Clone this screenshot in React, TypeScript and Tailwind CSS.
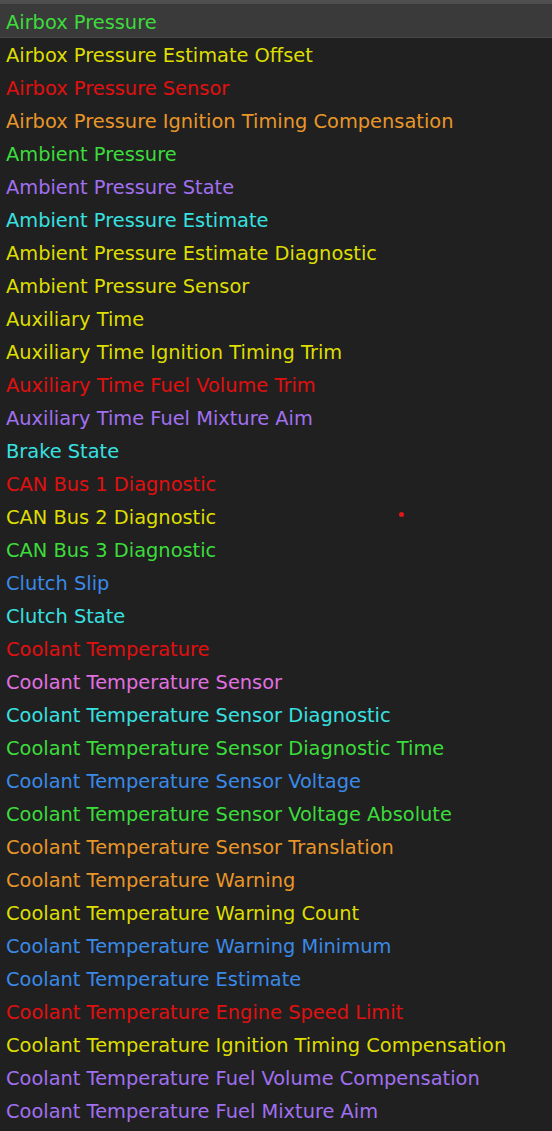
const GREEN = "text-[#3cdc3c]";
const YELLOW = "text-[#dede00]";
const RED = "text-[#e01010]";
const ORANGE = "text-[#e8962a]";
const PURPLE = "text-[#a070f0]";
const CYAN = "text-[#38e0e0]";
const BLUE = "text-[#3a8ae8]";
const PINK = "text-[#e070e0]";

const channels: [string, string][] = [
    ["Airbox Pressure", GREEN],
    ["Airbox Pressure Estimate Offset", YELLOW],
    ["Airbox Pressure Sensor", RED],
    ["Airbox Pressure Ignition Timing Compensation", ORANGE],
    ["Ambient Pressure", GREEN],
    ["Ambient Pressure State", PURPLE],
    ["Ambient Pressure Estimate", CYAN],
    ["Ambient Pressure Estimate Diagnostic", YELLOW],
    ["Ambient Pressure Sensor", YELLOW],
    ["Auxiliary Time", YELLOW],
    ["Auxiliary Time Ignition Timing Trim", YELLOW],
    ["Auxiliary Time Fuel Volume Trim", RED],
    ["Auxiliary Time Fuel Mixture Aim", PURPLE],
    ["Brake State", CYAN],
    ["CAN Bus 1 Diagnostic", RED],
    ["CAN Bus 2 Diagnostic", YELLOW],
    ["CAN Bus 3 Diagnostic", GREEN],
    ["Clutch Slip", BLUE],
    ["Clutch State", CYAN],
    ["Coolant Temperature", RED],
    ["Coolant Temperature Sensor", PINK],
    ["Coolant Temperature Sensor Diagnostic", CYAN],
    ["Coolant Temperature Sensor Diagnostic Time", GREEN],
    ["Coolant Temperature Sensor Voltage", BLUE],
    ["Coolant Temperature Sensor Voltage Absolute", GREEN],
    ["Coolant Temperature Sensor Translation", ORANGE],
    ["Coolant Temperature Warning", ORANGE],
    ["Coolant Temperature Warning Count", YELLOW],
    ["Coolant Temperature Warning Minimum", BLUE],
    ["Coolant Temperature Estimate", BLUE],
    ["Coolant Temperature Engine Speed Limit", RED],
    ["Coolant Temperature Ignition Timing Compensation", YELLOW],
    ["Coolant Temperature Fuel Volume Compensation", PURPLE],
    ["Coolant Temperature Fuel Mixture Aim", PURPLE],
];

const App: React.FC = () => {
    return (
        <div className="relative w-[552px] h-[1131px] overflow-hidden bg-[#202020] font-['DejaVu_Sans',sans-serif] text-[19.4px]">
            {/* top edge */}
            <div className="h-[5px] bg-[#4e4e4e] border-b border-[#383838]" />
            <div className="flex flex-col">
                {channels.map(([name, color], i) => (
                    <div
                        key={name}
                        className={`h-[33px] flex items-center pl-[6px] pt-[3px] whitespace-nowrap ${color} ${i === 0 ? "bg-[#3a3a3a] border-b border-[#474747]" : ""}`}
                    >
                        {name}
                    </div>
                ))}
            </div>
            {/* stray marker */}
            <div className="absolute left-[399px] top-[512px] w-[5px] h-[5px] rounded-full bg-[#e01818]" />
        </div>
    );
};

export default App;
